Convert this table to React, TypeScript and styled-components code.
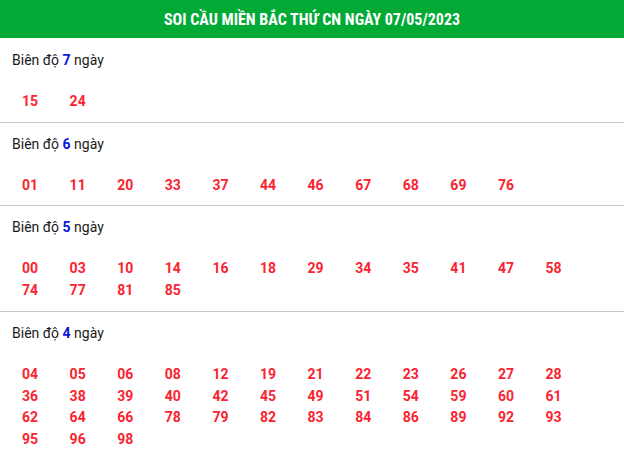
import React from 'react';
import styled, { createGlobalStyle } from 'styled-components';

const GlobalStyle = createGlobalStyle`
  html, body {
    margin: 0;
    padding: 0;
    background: #ffffff;
  }
  body {
    font-family: Roboto, "Liberation Sans", sans-serif;
  }
`;

const Box = styled.div`
  width: 624px;
  background: #ffffff;
`;

const Header = styled.h2`
  margin: 0;
  height: 38px;
  background: #00aa35;
  color: #ffffff;
  display: flex;
  align-items: center;
  justify-content: center;
  font-family: "Roboto Condensed", "Liberation Sans Narrow", "Arial Narrow", Roboto, sans-serif;
  font-weight: 700;
  font-size: 16px;
  text-transform: uppercase;
`;

const Section = styled.div`
  padding: 11px 0 9px;
  border-bottom: 1px solid #c6c6c6;

  &:first-of-type {
    padding-top: 12px;
  }

  &:last-child {
    border-bottom: none;
  }
`;

const Label = styled.div`
  padding-left: 12px;
  font-size: 14px;
  line-height: 20px;
  color: #1a1a1a;

  b {
    color: #0a17d8;
    font-weight: 700;
  }
`;

const Numbers = styled.div`
  margin-top: 21px;
  padding-left: 22px;
  display: grid;
  grid-template-columns: repeat(12, 47.6px);
`;

const Num = styled.span`
  font-size: 14px;
  font-weight: 700;
  line-height: 21.7px;
  color: #fa2330;
`;

const groups: { days: number; nums: string[] }[] = [
  { days: 7, nums: ['15', '24'] },
  { days: 6, nums: ['01', '11', '20', '33', '37', '44', '46', '67', '68', '69', '76'] },
  { days: 5, nums: ['00', '03', '10', '14', '16', '18', '29', '34', '35', '41', '47', '58', '74', '77', '81', '85'] },
  {
    days: 4,
    nums: [
      '04', '05', '06', '08', '12', '19', '21', '22', '23', '26', '27', '28',
      '36', '38', '39', '40', '42', '45', '49', '51', '54', '59', '60', '61',
      '62', '64', '66', '78', '79', '82', '83', '84', '86', '89', '92', '93',
      '95', '96', '98',
    ],
  },
];

export default function App() {
  return (
    <>
      <GlobalStyle />
      <Box>
        <Header>Soi cầu miền Bắc thứ CN ngày 07/05/2023</Header>
        {groups.map((g) => (
          <Section key={g.days}>
            <Label>
              Biên độ <b>{g.days}</b> ngày
            </Label>
            <Numbers>
              {g.nums.map((n) => (
                <Num key={n}>{n}</Num>
              ))}
            </Numbers>
          </Section>
        ))}
      </Box>
    </>
  );
}
